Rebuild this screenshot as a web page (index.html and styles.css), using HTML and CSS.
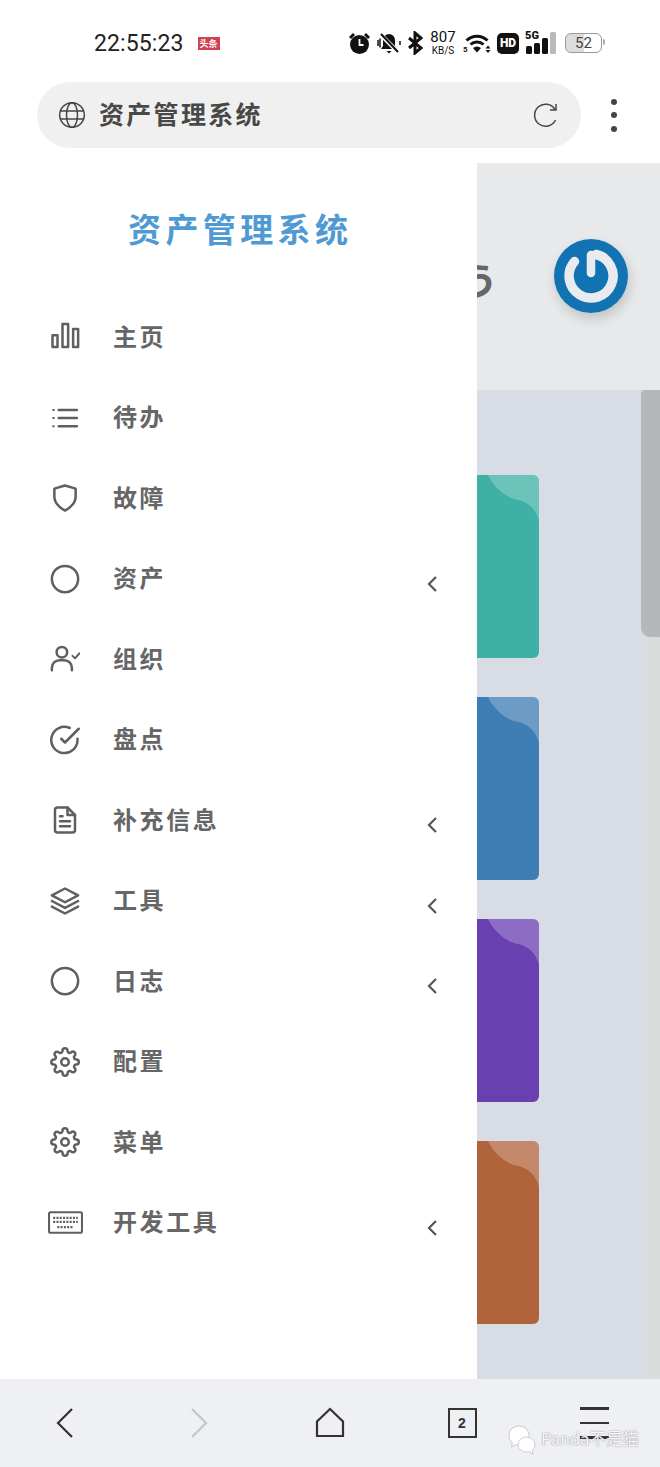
FILE: index.html
```html
<!DOCTYPE html>
<html lang="zh-CN">
<head>
  <meta charset="UTF-8">
  <meta name="viewport" content="width=device-width, initial-scale=1.0">
  <title>资产管理系统</title>
  <link rel="stylesheet" href="styles.css">
</head>
<body>
  <div class="phone">
    <div class="status-bar">
      <div class="status-left">
        <span class="clock">22:55:23</span>
        <span class="news-badge">头条</span>
      </div>
      <div class="status-right">
        <svg class="st-alarm" width="23" height="24" viewBox="0 0 23 24"><circle cx="11.5" cy="13.5" r="9.5" fill="#111"/><path d="M11.5 8v6h4" fill="none" stroke="#fff" stroke-width="1.8"/><path d="M1 6l4-4 2 2-4 4zM22 6l-4-4-2 2 4 4z" fill="#111"/></svg>
        <svg class="st-bell" width="24" height="24" viewBox="0 0 24 24"><path d="M12 3a6 6 0 0 1 6 6v6l2 3H4l2-3V9a6 6 0 0 1 6-6z" fill="#111"/><path d="M9.500 20h5l-2.500 2.500z" fill="#111"/><path d="M3 3l18 18" stroke="#fff" stroke-width="4"/><path d="M4 3l17 18" stroke="#111" stroke-width="2"/><path d="M1 9v6M3 7.500v9M23 10v4" stroke="#111" stroke-width="1.500"/></svg>
        <svg class="st-bt" width="16" height="24" viewBox="0 0 16 24"><path d="M2 7l12 10-6 5V2l6 5L2 17" fill="none" stroke="#111" stroke-width="3"/></svg>
        <div class="speed"><span class="speed-num">807</span><span class="speed-unit">KB/S</span></div>
        <div class="wifi">
          <span class="wifi-five">5</span>
          <svg width="28" height="22" viewBox="0 0 28 22"><path d="M3.500 8.500a15 15 0 0 1 21 0M7.500 12.500a9.500 9.500 0 0 1 13 0" fill="none" stroke="#111" stroke-width="3"/><path d="M10 16a6 6 0 0 1 8 0l-4 4.500z" fill="#111"/><path d="M25 13.500l2.500 3h-5zM25 21l2.500-3h-5z" fill="#111"/></svg>
        </div>
        <span class="hd-badge">HD</span>
        <div class="signal">
          <span class="five-g">5G</span>
          <div class="bars"><i class="bar bar-1"></i><i class="bar bar-2"></i><i class="bar bar-3"></i><i class="bar bar-4"></i></div>
        </div>
        <div class="battery"><span class="battery-level">52</span></div>
      </div>
    </div>

    <div class="browser-bar">
      <div class="address">
        <svg class="globe" width="28" height="28" viewBox="0 0 28 28" fill="none" stroke="#444" stroke-width="1.500"><circle cx="14" cy="14" r="12.300"/><ellipse cx="14" cy="14" rx="5.500" ry="12.300"/><path d="M2 10h24M2 18h24"/></svg>
        <span class="address-title">资产管理系统</span>
        <svg class="reload" width="28" height="28" viewBox="0 0 28 28" fill="none" stroke="#444" stroke-width="1.500"><path d="M23.500 19a11 11 0 1 1-.5-10.500"/><path d="M24 3v6h-6"/></svg>
      </div>
      <div class="more-btn"><i></i><i></i><i></i></div>
    </div>

    <div class="page">
      <aside class="drawer">
        <div class="drawer-title">资产管理系统</div>
        <ul class="menu">
          <li class="menu-item">
            <svg class="menu-icon" viewBox="0 0 24 24"><rect x="2" y="10.500" width="4" height="9.500"/><rect x="10" y="1.500" width="4.500" height="18.500"/><rect x="18.500" y="5.500" width="4" height="14.500"/></svg>
            <span class="menu-text">主页</span>
          </li>
          <li class="menu-item">
            <svg class="menu-icon" viewBox="0 0 24 24"><path d="M7 5.500h14.500M7 12h14.500M7 18.500h14.500"/><path class="thin" d="M2.500 5.500h.5M2.500 12h.5M2.500 18.500h.5"/></svg>
            <span class="menu-text">待办</span>
          </li>
          <li class="menu-item">
            <svg class="menu-icon" viewBox="0 0 24 24"><path d="M12 22s8.500-4 8.500-11V4.500L12 2 3.500 4.500V11c0 7 8.500 11 8.500 11z"/></svg>
            <span class="menu-text">故障</span>
          </li>
          <li class="menu-item">
            <svg class="menu-icon" viewBox="0 0 24 24"><circle cx="12" cy="12" r="10.500"/></svg>
            <span class="menu-text">资产</span>
            <svg class="chevron" viewBox="0 0 12 18"><path d="M10 2L3 9l7 7"/></svg>
          </li>
          <li class="menu-item">
            <svg class="menu-icon" viewBox="0 0 24 24"><circle cx="9.500" cy="6.500" r="4.200"/><path d="M1.500 21v-2a6 6 0 0 1 6-6h4a6 6 0 0 1 6 6v2"/><path class="thin" d="M18 9.500l2 2 3.500-4"/></svg>
            <span class="menu-text">组织</span>
          </li>
          <li class="menu-item">
            <svg class="menu-icon" viewBox="0 0 24 24"><path d="M22 11v1a10.500 10.500 0 1 1-6.200-9.600"/><path d="M23 3L12 14l-3-3"/></svg>
            <span class="menu-text">盘点</span>
          </li>
          <li class="menu-item">
            <svg class="menu-icon" viewBox="0 0 24 24"><path d="M14 2H6a2 2 0 0 0-2 2v16a2 2 0 0 0 2 2h12a2 2 0 0 0 2-2V8z"/><path d="M14 2v6h6M8 13h8M8 17h8M8 9h2"/></svg>
            <span class="menu-text">补充信息</span>
            <svg class="chevron" viewBox="0 0 12 18"><path d="M10 2L3 9l7 7"/></svg>
          </li>
          <li class="menu-item">
            <svg class="menu-icon" viewBox="0 0 24 24"><path d="M12 2L1.500 7.500 12 13l10.500-5.500z"/><path d="M1.500 16.500L12 22l10.500-5.500M1.500 12L12 17.500 22.500 12"/></svg>
            <span class="menu-text">工具</span>
            <svg class="chevron" viewBox="0 0 12 18"><path d="M10 2L3 9l7 7"/></svg>
          </li>
          <li class="menu-item">
            <svg class="menu-icon" viewBox="0 0 24 24"><circle cx="12" cy="12" r="10.500"/></svg>
            <span class="menu-text">日志</span>
            <svg class="chevron" viewBox="0 0 12 18"><path d="M10 2L3 9l7 7"/></svg>
          </li>
          <li class="menu-item">
            <svg class="menu-icon" viewBox="0 0 24 24"><circle cx="12" cy="12" r="3"/><path d="M19.400 15a1.650 1.650 0 0 0 .33 1.820l.06.06a2 2 0 0 1 0 2.830 2 2 0 0 1-2.830 0l-.06-.06a1.650 1.650 0 0 0-1.820-.33 1.650 1.650 0 0 0-1 1.510V21a2 2 0 0 1-2 2 2 2 0 0 1-2-2v-.09A1.650 1.650 0 0 0 9 19.400a1.650 1.650 0 0 0-1.820.33l-.06.06a2 2 0 0 1-2.830 0 2 2 0 0 1 0-2.830l.06-.06a1.650 1.650 0 0 0 .33-1.820 1.650 1.650 0 0 0-1.510-1H3a2 2 0 0 1-2-2 2 2 0 0 1 2-2h.09A1.650 1.650 0 0 0 4.600 9a1.650 1.650 0 0 0-.33-1.820l-.06-.06a2 2 0 0 1 0-2.830 2 2 0 0 1 2.830 0l.06.06a1.650 1.650 0 0 0 1.820.33H9a1.650 1.650 0 0 0 1-1.510V3a2 2 0 0 1 2-2 2 2 0 0 1 2 2v.09a1.650 1.650 0 0 0 1 1.510 1.650 1.650 0 0 0 1.820-.33l.06-.06a2 2 0 0 1 2.830 0 2 2 0 0 1 0 2.830l-.06.06a1.650 1.650 0 0 0-.33 1.820V9a1.650 1.650 0 0 0 1.510 1H21a2 2 0 0 1 2 2 2 2 0 0 1-2 2h-.09a1.650 1.650 0 0 0-1.510 1z"/></svg>
            <span class="menu-text">配置</span>
          </li>
          <li class="menu-item">
            <svg class="menu-icon" viewBox="0 0 24 24"><circle cx="12" cy="12" r="3"/><path d="M19.400 15a1.650 1.650 0 0 0 .33 1.820l.06.06a2 2 0 0 1 0 2.830 2 2 0 0 1-2.830 0l-.06-.06a1.650 1.650 0 0 0-1.820-.33 1.650 1.650 0 0 0-1 1.510V21a2 2 0 0 1-2 2 2 2 0 0 1-2-2v-.09A1.650 1.650 0 0 0 9 19.400a1.650 1.650 0 0 0-1.820.33l-.06.06a2 2 0 0 1-2.830 0 2 2 0 0 1 0-2.830l.06-.06a1.650 1.650 0 0 0 .33-1.820 1.650 1.650 0 0 0-1.510-1H3a2 2 0 0 1-2-2 2 2 0 0 1 2-2h.09A1.650 1.650 0 0 0 4.600 9a1.650 1.650 0 0 0-.33-1.820l-.06-.06a2 2 0 0 1 0-2.830 2 2 0 0 1 2.830 0l.06.06a1.650 1.650 0 0 0 1.820.33H9a1.650 1.650 0 0 0 1-1.510V3a2 2 0 0 1 2-2 2 2 0 0 1 2 2v.09a1.650 1.650 0 0 0 1 1.510 1.650 1.650 0 0 0 1.820-.33l.06-.06a2 2 0 0 1 2.830 0 2 2 0 0 1 0 2.830l-.06.06a1.650 1.650 0 0 0-.33 1.820V9a1.650 1.650 0 0 0 1.510 1H21a2 2 0 0 1 2 2 2 2 0 0 1-2 2h-.09a1.650 1.650 0 0 0-1.510 1z"/></svg>
            <span class="menu-text">菜单</span>
          </li>
          <li class="menu-item">
            <svg class="menu-icon icon-wide" viewBox="0 0 34 24"><rect x="1" y="2" width="32" height="20" rx="1.500"/><path class="keys" d="M5 7.500h24M5 11.500h24M9 16.500h16"/></svg>
            <span class="menu-text">开发工具</span>
            <svg class="chevron" viewBox="0 0 12 18"><path d="M10 2L3 9l7 7"/></svg>
          </li>
        </ul>
      </aside>

      <main class="main">
        <header class="topbar">
          <span class="topbar-text">う</span>
          <div class="power-btn">
            <svg width="74" height="74" viewBox="0 0 74 74"><circle cx="37" cy="37" r="37" fill="#1273b3"/><path d="M20.500 22.500A22 22 0 1 0 42 15.500" fill="none" stroke="#e9ecef" stroke-width="9.500" stroke-linecap="round"/><path d="M37 16v18" stroke="#e9ecef" stroke-width="8.500" stroke-linecap="round"/></svg>
          </div>
        </header>
        <section class="content">
          <div class="card card-teal"></div>
          <div class="card card-blue"></div>
          <div class="card card-purple"></div>
          <div class="card card-orange"></div>
          <div class="scroll-thumb"></div>
        </section>
      </main>
    </div>

    <nav class="bottom-nav">
      <div class="nav-item"><svg width="20" height="32" viewBox="0 0 20 32" class="nav-icon nav-back"><path d="M17 2L3 16l14 14"/></svg></div>
      <div class="nav-item"><svg width="20" height="32" viewBox="0 0 20 32" class="nav-icon nav-disabled"><path d="M3 2l14 14L3 30"/></svg></div>
      <div class="nav-item"><svg width="32" height="32" viewBox="0 0 32 32" class="nav-icon"><path d="M16 2L3 14.500V29h26V14.500z"/></svg></div>
      <div class="nav-item"><span class="tab-count">2</span></div>
      <div class="nav-item"><div class="nav-menu"><i></i><i></i><i></i></div></div>
    </nav>

    <div class="watermark">
      <svg width="28" height="32" viewBox="0 0 28 32" fill="#fff" stroke="#c9cacc" stroke-width="1"><path d="M11 1C5.500 1 1 5 1 10.500c0 3 1.300 5.500 3.300 7L3.500 22l4-2.500c1.200.4 2.300.6 3.500.6 5.500 0 10-4 10-9.600S16.500 1 11 1z"/><path d="M18.500 12c-4.700 0-8.500 3.400-8.500 7.500s3.800 7.500 8.500 7.500c1 0 2-.2 2.800-.5l3.700 3-.7-4.500c1.800-1.300 2.700-3.400 2.700-5.500 0-4.100-3.800-7.500-8.500-7.500z"/></svg>
      <span class="watermark-text">Panda不是猫</span>
    </div>
  </div>
</body>
</html>
```

FILE: styles.css
```css
* {
  box-sizing: border-box;
}

body {
  margin: 0;
  padding: 0;
  background: #fff;
  font-family: "Noto Sans CJK SC", "Noto Sans", sans-serif;
}

i {
  display: block;
}

.phone {
  position: relative;
  width: 660px;
  height: 1467px;
  overflow: hidden;
  display: flex;
  flex-direction: column;
}

/* status bar */
.status-bar {
  height: 82px;
  flex: none;
  display: flex;
  justify-content: space-between;
  align-items: center;
  padding: 4px 58px 0 94px;
  color: #111;
}

.status-left {
  display: flex;
  align-items: center;
  gap: 14px;
}

.clock {
  font-family: Roboto, sans-serif;
  font-size: 23px;
  letter-spacing: 0.1px;
  color: #222;
}

.news-badge {
  width: 22px;
  height: 13px;
  background: #d2414f;
  color: #fff;
  font-size: 9px;
  line-height: 13px;
  text-align: center;
  font-weight: 700;
}

.status-right {
  display: flex;
  align-items: center;
  gap: 6px;
}

.speed {
  display: flex;
  flex-direction: column;
  align-items: center;
  font-family: Roboto, sans-serif;
  width: 28px;
}

.speed-num {
  font-size: 15px;
  line-height: 14px;
}

.speed-unit {
  font-size: 10px;
  line-height: 11px;
  margin-top: 1px;
}

.wifi {
  position: relative;
  width: 28px;
  height: 22px;
}

.wifi-five {
  position: absolute;
  left: 0;
  top: 14px;
  font-family: Roboto, sans-serif;
  font-size: 8px;
  font-weight: 700;
  line-height: 8px;
}

.hd-badge {
  width: 22px;
  height: 21px;
  background: #111;
  color: #fff;
  border-radius: 5px;
  font-family: Roboto, sans-serif;
  font-size: 12px;
  font-weight: 900;
  line-height: 21px;
  text-align: center;
}

.signal {
  position: relative;
  width: 33px;
  height: 24px;
}

.five-g {
  position: absolute;
  left: 0;
  top: -1px;
  font-family: Roboto, sans-serif;
  font-size: 11px;
  font-weight: 900;
  line-height: 11px;
}

.bars {
  position: absolute;
  left: 1px;
  bottom: 1px;
  display: flex;
  align-items: flex-end;
  gap: 2px;
}

.bar {
  width: 6px;
  background: #111;
  border-radius: 1.5px;
}

.bar-1 { height: 8px; }
.bar-2 { height: 11px; }
.bar-3 { height: 16px; }
.bar-4 { height: 22px; background: #b9b9b9; }

.battery {
  position: relative;
  width: 37px;
  height: 20px;
  border: 1.5px solid #999;
  border-radius: 6px;
  margin-left: 1px;
  display: flex;
  align-items: center;
  justify-content: center;
  background: linear-gradient(to right, #ddd 52%, #fff 52%);
}

.battery::after {
  content: "";
  position: absolute;
  right: -4px;
  top: 5px;
  width: 2px;
  height: 6px;
  background: #aaa;
  border-radius: 0 2px 2px 0;
}

.battery-level {
  font-family: Roboto, sans-serif;
  font-size: 15px;
  color: #444;
}

/* browser address bar */
.browser-bar {
  height: 66px;
  flex: none;
  margin-bottom: 15px;
  padding: 0 43px 0 37px;
  display: flex;
  align-items: center;
  justify-content: space-between;
}

.address {
  width: 544px;
  height: 66px;
  background: #f0f0f0;
  border-radius: 33px;
  display: flex;
  align-items: center;
  padding: 0 21px;
}

.address-title {
  margin: -5px 0 0 13px;
  flex: 1;
  font-size: 25px;
  font-weight: 700;
  letter-spacing: 2.3px;
  color: #484848;
}

.more-btn {
  display: flex;
  flex-direction: column;
  gap: 7.5px;
}

.more-btn i {
  width: 6px;
  height: 6px;
  border-radius: 50%;
  background: #444;
}

/* page */
.page {
  flex: 1;
  min-height: 0;
  display: flex;
}

.drawer {
  width: 477px;
  flex: none;
  background: #fff;
  position: relative;
  z-index: 2;
}

.drawer-title {
  height: 133.75px;
  padding: 0 0 3px 128px;
  display: flex;
  align-items: center;
  font-size: 33px;
  font-weight: 700;
  letter-spacing: 4.4px;
  color: #4f9ad4;
}

.menu {
  list-style: none;
  margin: 0;
  padding: 0;
}

.menu-item {
  height: 80.5px;
  display: flex;
  align-items: center;
  padding: 0 38px 0 50px;
}

.menu-icon {
  width: 30px;
  height: 30px;
  flex: none;
  fill: none;
  stroke: #5f5f5f;
  stroke-width: 2;
  stroke-linecap: round;
  stroke-linejoin: round;
}

.menu-icon .thin {
  stroke-width: 1.6;
}

.menu-icon .keys {
  stroke-width: 2.2;
  stroke-linecap: butt;
  stroke-dasharray: 2 1.2;
}

.icon-wide {
  width: 35px;
  height: 25px;
  margin-left: -2px;
  margin-right: -3px;
}

.menu-text {
  flex: 1;
  margin: -4px 0 0 33px;
  font-size: 24px;
  font-weight: 700;
  letter-spacing: 2.6px;
  color: #666;
}

.chevron {
  width: 12px;
  height: 18px;
  margin-top: 10px;
  margin-right: 1px;
  fill: none;
  stroke: #555;
  stroke-width: 2.2;
}

/* page behind the drawer */
.main {
  flex: 1;
  min-width: 0;
  display: flex;
  flex-direction: column;
}

.topbar {
  height: 227px;
  flex: none;
  background: #e8e9eb;
  display: flex;
  align-items: center;
  justify-content: space-between;
  padding: 0 32px 0 0;
  overflow: hidden;
}

.topbar-text {
  margin-left: -17px;
  margin-top: 3px;
  font-size: 38px;
  font-weight: 700;
  color: #666;
}

.power-btn {
  height: 74px;
  margin-top: -1px;
  border-radius: 50%;
  box-shadow: 2px 6px 12px rgba(0, 0, 0, 0.16);
}

.content {
  position: relative;
  flex: 1;
  min-height: 0;
  background: linear-gradient(to right, #d8dce4 169px, #d8dddc 172px);
  padding-top: 85px;
  display: flex;
  flex-direction: column;
  gap: 39px;
}

.card {
  position: relative;
  width: 62px;
  height: 183px;
  flex: none;
  border-radius: 0 6px 6px 0;
  overflow: hidden;
}

.card::before {
  content: "";
  position: absolute;
  top: 0;
  right: 0;
  width: 51px;
  height: 46px;
  background: rgba(255, 255, 255, 0.24);
  clip-path: path("M0 0 C6 12 16 22 30 25 C40 27 48 34 51 46 L51 0 Z");
}

.card-teal { background: #3eb0a5; }
.card-blue { background: #3f7db5; }
.card-purple { background: #6a3fb0; }
.card-orange { background: #b0643c; }

.scroll-thumb {
  position: absolute;
  top: 0;
  right: 0;
  width: 19px;
  height: 247px;
  background: #b5b7ba;
  border-radius: 4px 0 0 9px;
}

/* bottom navigation */
.bottom-nav {
  height: 88px;
  flex: none;
  background: #eff0f4;
  display: grid;
  grid-template-columns: repeat(5, 1fr);
  align-items: center;
}

.nav-item {
  display: flex;
  justify-content: center;
  align-items: center;
}

.nav-icon {
  fill: none;
  stroke: #333;
  stroke-width: 2.2;
}

.nav-back {
  margin-right: 3px;
}

.nav-disabled {
  stroke: #c4c5c8;
  margin-left: 2px;
}

.tab-count {
  width: 29px;
  height: 30px;
  border: 2px solid #333;
  font-family: "Liberation Sans", sans-serif;
  font-size: 14px;
  font-weight: 700;
  line-height: 26px;
  text-align: center;
  color: #333;
}

.nav-menu {
  display: flex;
  flex-direction: column;
  gap: 12px;
}

.nav-menu i {
  width: 29px;
  height: 2.5px;
  background: #333;
}

/* account watermark */
.watermark {
  position: absolute;
  left: 508px;
  top: 1425px;
  display: flex;
  align-items: center;
  gap: 5px;
}

.watermark-text {
  margin-top: -6px;
  font-size: 16.5px;
  color: #f6f6f6;
  text-shadow: 0 0 1.5px #777;
}
```
